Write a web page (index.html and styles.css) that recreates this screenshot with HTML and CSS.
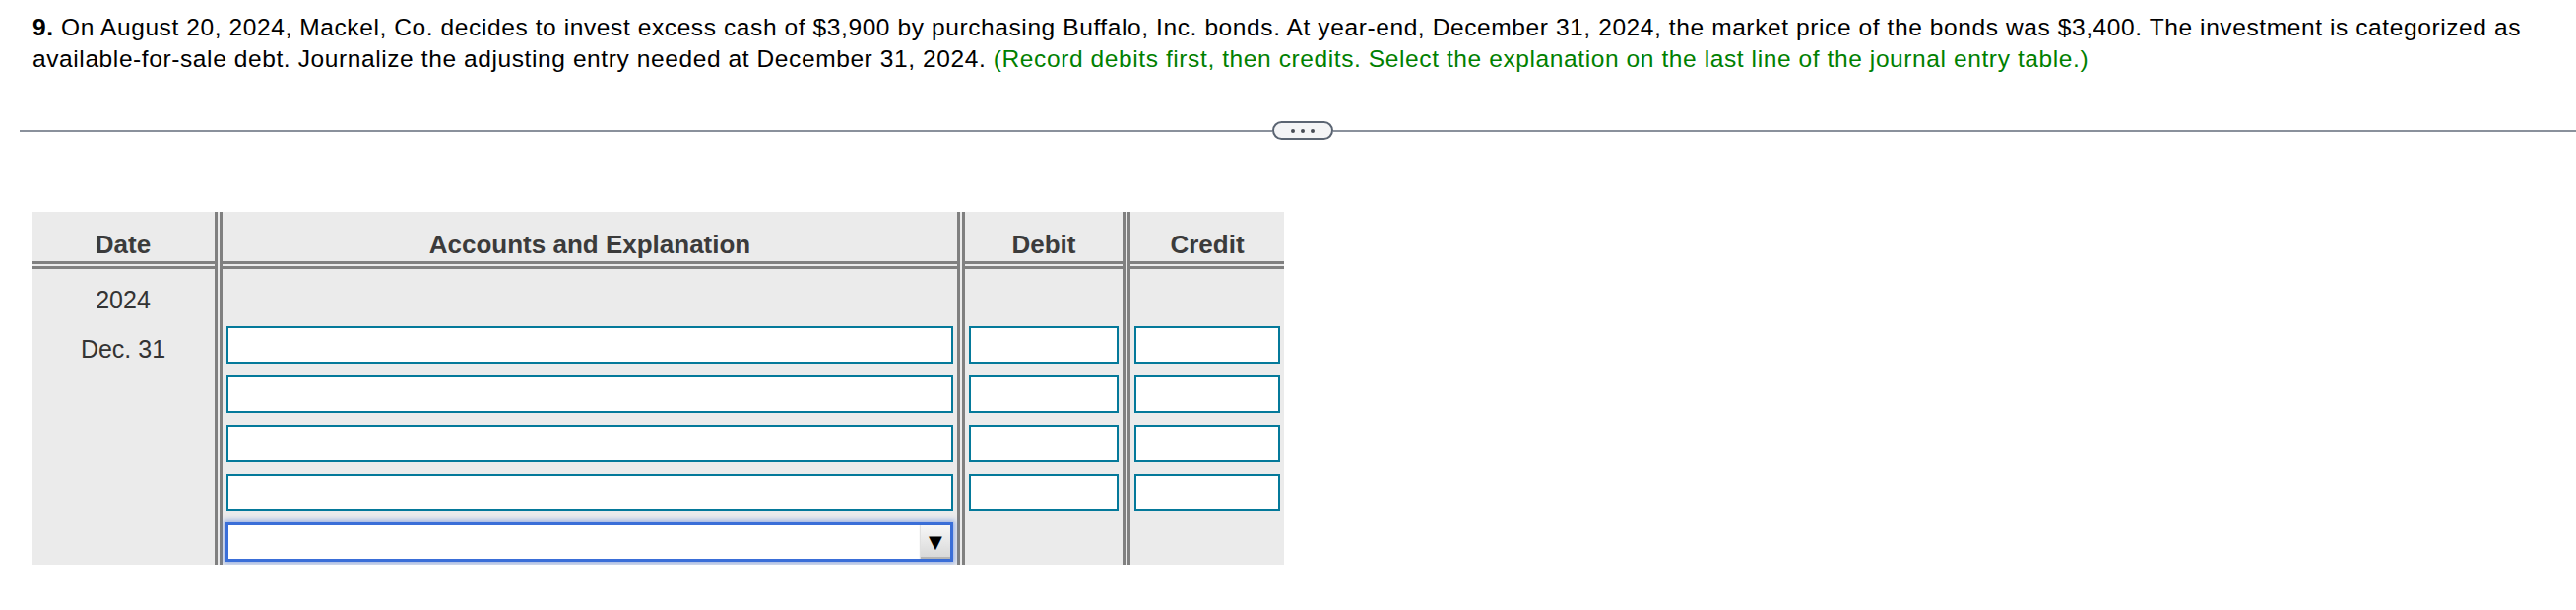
FILE: index.html
```html
<!DOCTYPE html>
<html lang="en">
<head>
<meta charset="utf-8">
<title>Journal entry</title>
<link rel="stylesheet" href="styles.css">
</head>
<body>
<div class="page">
  <p class="question"><b>9.</b> On August 20, 2024, Mackel, Co. decides to invest excess cash of $3,900 by purchasing Buffalo, Inc. bonds. At year-end, December 31, 2024, the market price of the bonds was $3,400. The investment is categorized as available-for-sale debt. Journalize the adjusting entry needed at December 31, 2024. <span class="hint">(Record debits first, then credits. Select the explanation on the last line of the journal entry table.)</span></p>

  <div class="divider">
    <div class="rule rule-left"></div>
    <div class="pill"><span class="dot"></span><span class="dot"></span><span class="dot"></span></div>
    <div class="rule rule-right"></div>
  </div>

  <div class="journal">
    <div class="head c1">Date</div>
    <div class="vsep s1"></div>
    <div class="head c3">Accounts and Explanation</div>
    <div class="vsep s2"></div>
    <div class="head c5">Debit</div>
    <div class="vsep s3"></div>
    <div class="head c7">Credit</div>

    <div class="body c1 date-col">
      <div class="date-line">2024</div>
      <div class="date-line">Dec. 31</div>
    </div>
    <div class="body c3 field-col">
      <div class="field"></div>
      <div class="field"></div>
      <div class="field"></div>
      <div class="field"></div>
      <div class="select"><span class="arrow">▼</span></div>
    </div>
    <div class="body c5 field-col">
      <div class="field"></div>
      <div class="field"></div>
      <div class="field"></div>
      <div class="field"></div>
    </div>
    <div class="body c7 field-col">
      <div class="field"></div>
      <div class="field"></div>
      <div class="field"></div>
      <div class="field"></div>
    </div>
  </div>
</div>
</body>
</html>
```

FILE: styles.css
```css
html, body {
  margin: 0;
  padding: 0;
  background: #ffffff;
}

.page {
  font-family: "Liberation Sans", Arial, sans-serif;
  color: #000;
}

.question {
  margin: 0;
  padding: 12px 20px 0 33px;
  font-size: 24.5px;
  line-height: 32px;
  letter-spacing: 0.6px;
}

.question b {
  font-weight: bold;
}

.hint {
  color: #008000;
}

.divider {
  display: flex;
  align-items: center;
  height: 19px;
  margin: 47px 0 0 20px;
}

.rule {
  height: 2px;
  background: #8a919c;
}

.rule-left {
  width: 1272px;
}

.rule-right {
  flex: 1;
}

.pill {
  box-sizing: border-box;
  width: 62px;
  height: 19px;
  border: 2px solid #5a6472;
  border-radius: 10px;
  background: #f3f4f6;
  display: flex;
  align-items: center;
  justify-content: center;
  gap: 6px;
}

.dot {
  width: 4px;
  height: 4px;
  border-radius: 50%;
  background: #474c55;
}

.journal {
  display: grid;
  grid-template-columns: 186px 8px 746px 8px 160px 8px 156px;
  grid-template-rows: 58px 300px;
  width: max-content;
  margin: 73px 0 0 32px;
  background: #ebebeb;
}

.c1 { grid-column: 1; }
.c3 { grid-column: 3; }
.c5 { grid-column: 5; }
.c7 { grid-column: 7; }

.vsep {
  grid-row: 1 / 3;
  background: linear-gradient(to right, #808080 0 3px, #ebebeb 3px 5px, #808080 5px 8px);
}
.s1 { grid-column: 2; }
.s2 { grid-column: 4; }
.s3 { grid-column: 6; }

.head {
  grid-row: 1;
  box-sizing: border-box;
  height: 58px;
  padding-top: 16px;
  line-height: 34px;
  font-size: 26px;
  font-weight: bold;
  color: #3b3b3b;
  text-align: center;
  background: linear-gradient(to bottom, transparent 0 50px, #808080 50px 53px, transparent 53px 55px, #808080 55px 58px);
}

.body {
  grid-row: 2;
}

.date-col {
  padding-top: 6px;
  font-size: 25px;
  color: #333;
  text-align: center;
}

.date-line {
  line-height: 50px;
}

.field-col {
  display: flex;
  flex-direction: column;
  gap: 12px;
  padding: 58px 4px 0 4px;
}

.field {
  box-sizing: border-box;
  height: 38px;
  border: 2px solid #04799a;
  background: #fff;
}

.select {
  box-sizing: border-box;
  height: 40px;
  margin-top: -1px;
  margin-left: -1px;
  border: 3px solid #3a6ed8;
  background: #fff;
  box-shadow: 0 0 5px 2px rgba(60, 110, 220, 0.45);
  display: flex;
  justify-content: flex-end;
}

.arrow {
  box-sizing: border-box;
  width: 30px;
  height: 34px;
  background: linear-gradient(to bottom, #f7f7f7, #d9d9d9);
  border-bottom: 2px solid #b5b5b5;
  box-shadow: -1px 0 1px rgba(0, 0, 0, 0.12);
  font-family: "DejaVu Sans", sans-serif;
  font-size: 18px;
  line-height: 33px;
  text-align: center;
  color: #000;
}
```
